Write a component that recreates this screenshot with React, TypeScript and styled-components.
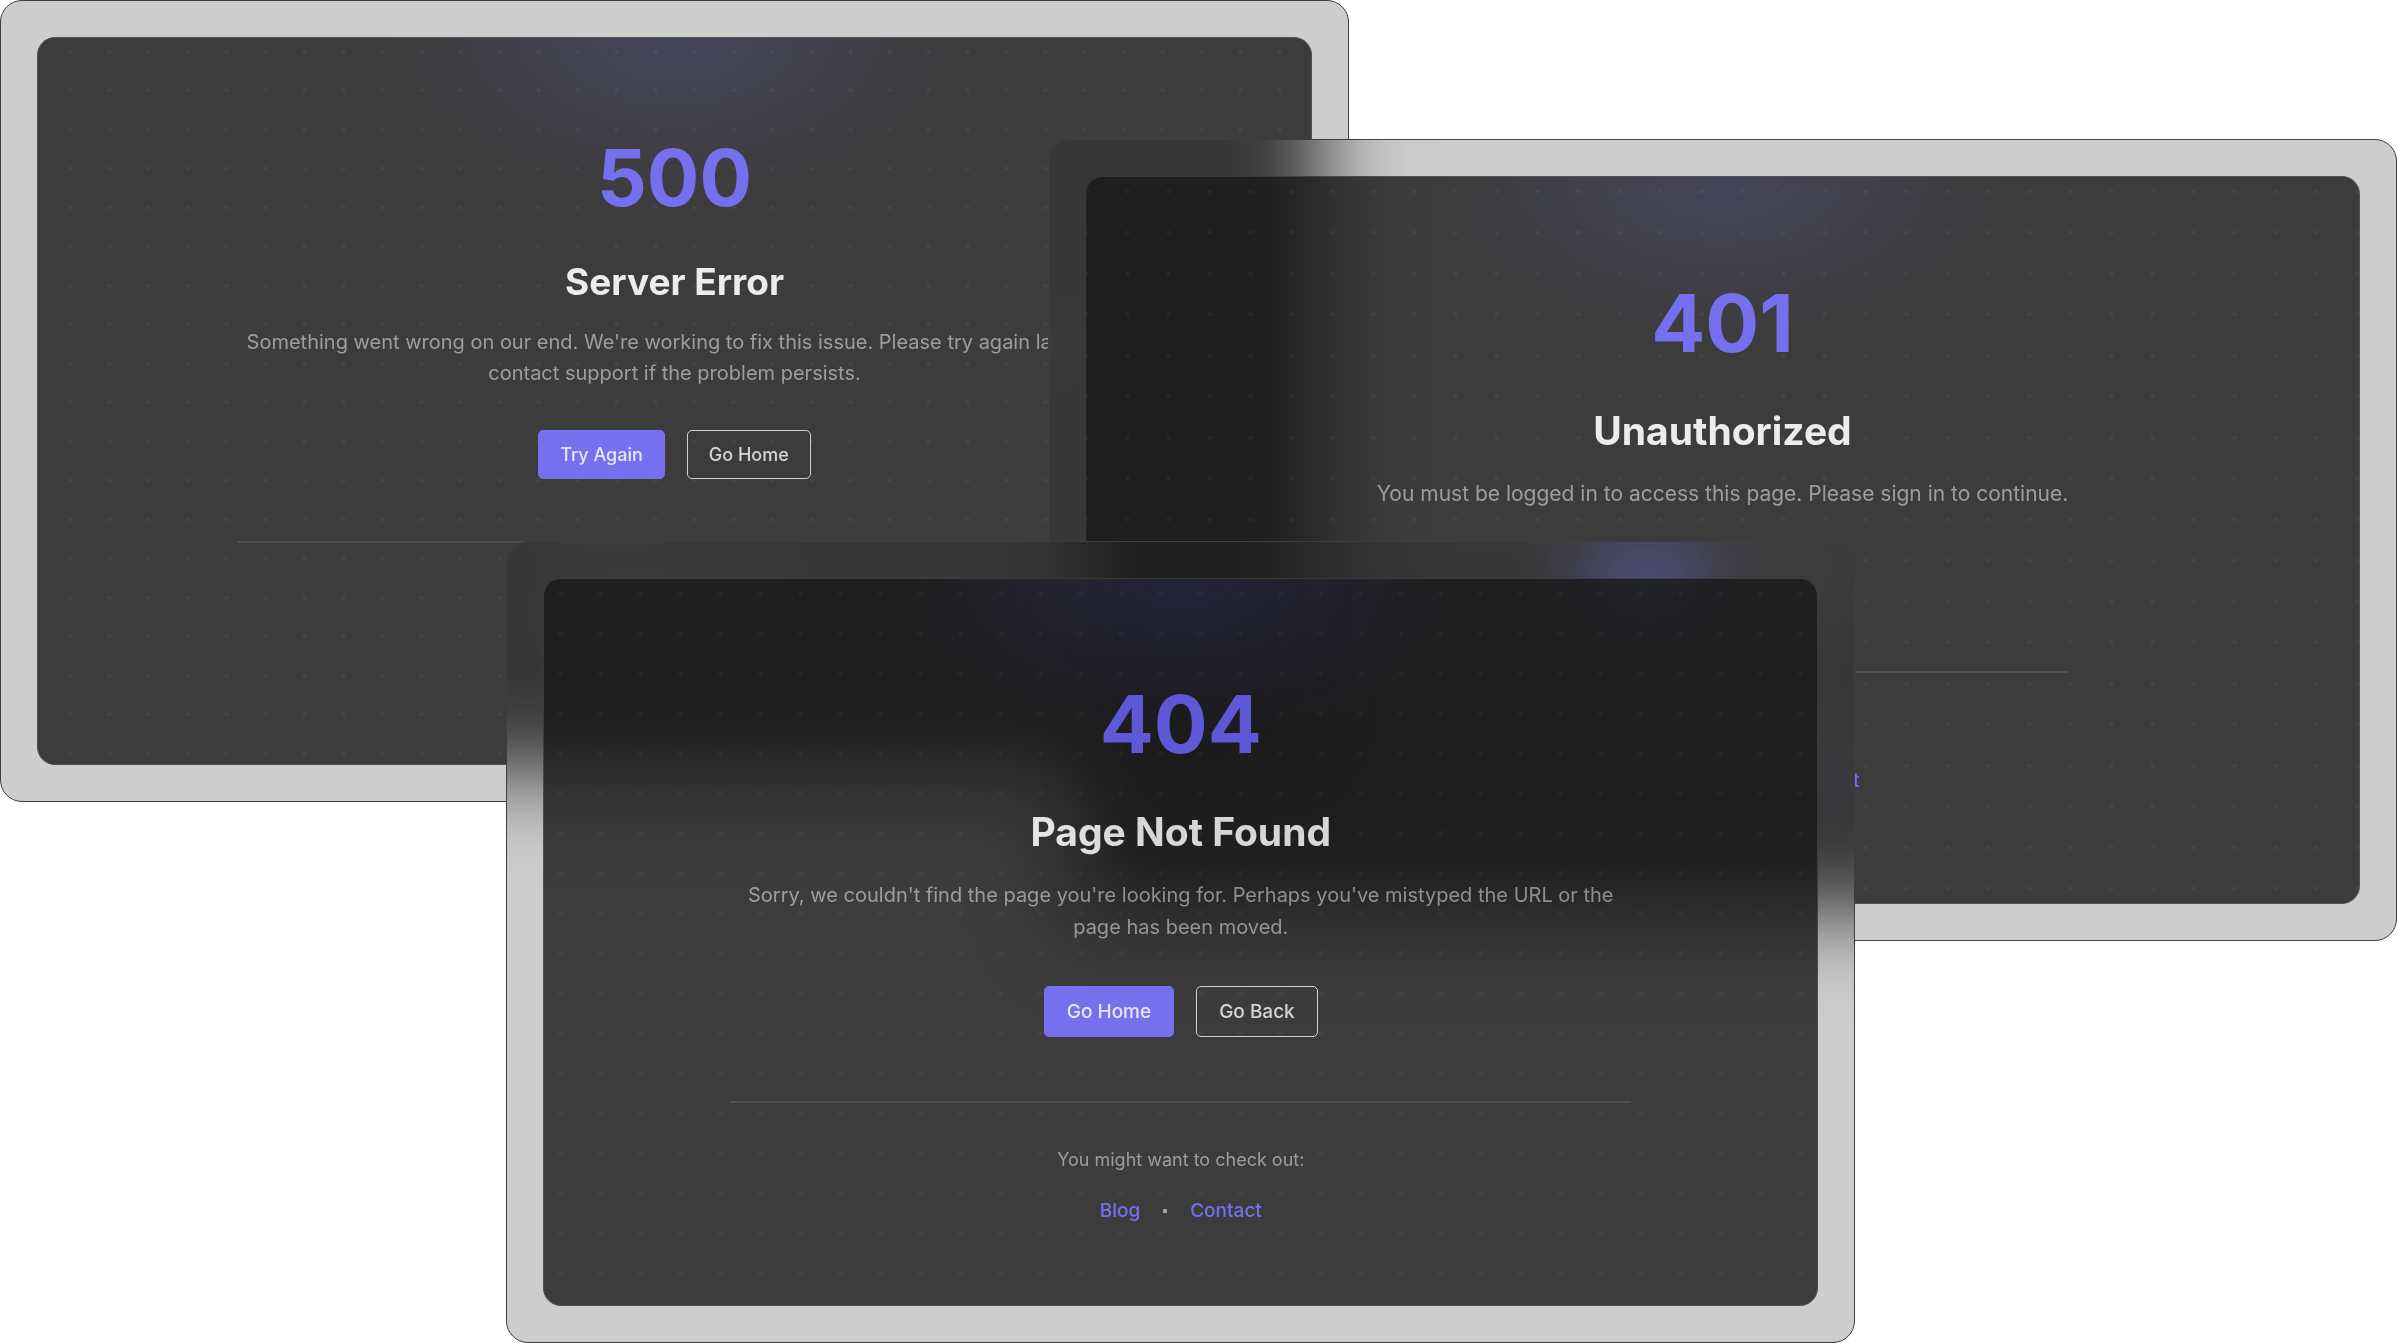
import React from "react";
import styled, { createGlobalStyle, css, ThemeProvider } from "styled-components";

type Scale = {
  code: number;
  title: number;
  titleLine: number;
  body: number;
  bodyLine: number;
  small: number;
  button: number;
  buttonPad: number;
  padTop: number;
  titleGap: number;
  bodyGap: number;
  actionGap: number;
  footGap: number;
  footPad: number;
  linkGap: number;
  max: number;
  dot: number;
};

const compact: Scale = {
  code: 78, title: 37, titleLine: 46, body: 20, bodyLine: 31, small: 18, button: 49, buttonPad: 21,
  padTop: 101, titleGap: 42, bodyGap: 22, actionGap: 41, footGap: 62, footPad: 41,
  linkGap: 22, max: 874, dot: 39,
};
const regular: Scale = {
  code: 80, title: 39, titleLine: 48, body: 20, bodyLine: 32, small: 19, button: 51, buttonPad: 22,
  padTop: 105, titleGap: 44, bodyGap: 23, actionGap: 43, footGap: 64, footPad: 43,
  linkGap: 23, max: 901, dot: 40,
};
const roomy: Scale = {
  code: 80, title: 39, titleLine: 48, body: 21, bodyLine: 33, small: 19, button: 52, buttonPad: 22,
  padTop: 106, titleGap: 44, bodyGap: 22, actionGap: 44, footGap: 65, footPad: 43,
  linkGap: 25, max: 910, dot: 41,
};

const Global = createGlobalStyle`
  * { box-sizing: border-box; }
  body {
    margin: 0;
    background: #fff;
    font-family: Inter, "Liberation Sans", sans-serif;
  }
`;

const Desktop = styled.main`
  position: relative;
  width: 100%;
  aspect-ratio: 2397 / 1343;
  overflow: hidden;
  background: #fff;
`;

type Place = "back" | "middle" | "front";

const places = {
  back: css`top: 0; left: 0;`,
  middle: css`top: 10.35%; right: 0;`,
  front: css`bottom: 0; left: 21.12%;`,
};

const corner = "radial-gradient(circle, #000 21px, transparent 22px)";
const fill = "linear-gradient(#000, #000)";

const Window = styled.section<{ $place: Place }>`
  position: absolute;
  z-index: 0;
  ${(p) => places[p.$place]}
  display: flex;
  width: 56.28%;
  aspect-ratio: 1349 / 802;
  padding: 37px;

  /* The glass reaches past the window, so that its blur is even up to the edge,
     and is masked back to the window's rounded shape. */
  &::before {
    content: "";
    position: absolute;
    z-index: -1;
    inset: -120px;
    padding: 120px;
    background: rgba(37, 37, 37, 0.23);
    backdrop-filter: blur(40px);
    mask-image: ${corner}, ${corner}, ${corner}, ${corner}, ${fill}, ${fill};
    mask-position: 0 0, 100% 0, 0 100%, 100% 100%, 0 22px, 22px 0;
    mask-size: 44px 44px, 44px 44px, 44px 44px, 44px 44px, 100% calc(100% - 44px), calc(100% - 44px) 100%;
    mask-repeat: no-repeat;
    mask-origin: content-box;
    mask-clip: content-box;
    pointer-events: none;
  }

  &::after {
    content: "";
    position: absolute;
    inset: 0;
    border: 1px solid #3e3e3e;
    border-radius: 22px;
    pointer-events: none;
  }
`;

const Screen = styled.div`
  flex: 1;
  display: flex;
  flex-direction: column;
  align-items: center;
  padding-top: ${(p) => (p.theme as Scale).padTop}px;
  border: 1px solid #3c3c3c;
  border-radius: 18px;
  opacity: 0.86;
  overflow: hidden;
  background:
    radial-gradient(ellipse 300px 170px at 50% 0, rgba(99, 92, 241, 0.17), rgba(99, 92, 241, 0.11) 40%, rgba(99, 92, 241, 0.03) 75%, transparent),
    radial-gradient(circle, rgba(255, 255, 255, 0.05) 1px, transparent 3px)
      calc(50% + 20px) -6px / ${(p) => `${(p.theme as Scale).dot}px ${(p.theme as Scale).dot}px`},
    rgba(25, 25, 25, 0.94);
`;

const Content = styled.div`
  display: flex;
  flex-direction: column;
  align-items: center;
  width: fit-content;
  max-width: ${(p) => (p.theme as Scale).max}px;
  text-align: center;
`;

const Code = styled.p`
  margin: 0;
  font-size: ${(p) => (p.theme as Scale).code}px;
  line-height: 1;
  font-weight: 700;
  color: #6762f4;
`;

const Title = styled.h1`
  margin: ${(p) => (p.theme as Scale).titleGap}px 0 0;
  font-size: ${(p) => (p.theme as Scale).title}px;
  line-height: ${(p) => (p.theme as Scale).titleLine}px;
  font-weight: 700;
  color: #f2f2f2;
`;

const Message = styled.p`
  margin: ${(p) => (p.theme as Scale).bodyGap}px 0 0;
  font-size: ${(p) => (p.theme as Scale).body}px;
  line-height: ${(p) => (p.theme as Scale).bodyLine}px;
  color: #969696;
`;

const Actions = styled.div`
  display: flex;
  gap: 22px;
  margin-top: ${(p) => (p.theme as Scale).actionGap}px;
`;

const Button = styled.button<{ $primary?: boolean }>`
  height: ${(p) => (p.theme as Scale).button}px;
  padding: 0 ${(p) => (p.theme as Scale).buttonPad}px;
  border: 1px solid ${(p) => (p.$primary ? "#6762f4" : "#d2d2d2")};
  border-radius: 5px;
  background: ${(p) => (p.$primary ? "#6762f4" : "transparent")};
  color: ${(p) => (p.$primary ? "#ebebff" : "#d6d6d6")};
  font-family: inherit;
  font-size: ${(p) => (p.theme as Scale).small}px;
  font-weight: 500;
`;

const Suggestions = styled.footer`
  display: flex;
  flex-direction: column;
  align-items: center;
  gap: 23px;
  width: 100%;
  margin-top: ${(p) => (p.theme as Scale).footGap}px;
  padding-top: ${(p) => (p.theme as Scale).footPad}px;
  border-top: 2px solid #3c3c3c;
  font-size: ${(p) => (p.theme as Scale).small}px;
  line-height: 28px;
  color: #969696;
`;

const Hint = styled.p`
  margin: 0;
  font-size: 18px;
`;

const Links = styled.nav`
  display: flex;
  align-items: center;
  gap: ${(p) => (p.theme as Scale).linkGap}px;
`;

const Link = styled.a`
  color: #6762f4;
  font-weight: 500;
  text-decoration: none;
`;

const Dot = styled.span`
  width: 4px;
  height: 4px;
  border-radius: 1px;
  background: #a0a0a0;
`;

type ErrorPageProps = {
  place: Place;
  scale: Scale;
  code: string;
  title: string;
  message: string;
  primary: string;
  secondary: string;
  links: string[];
};

function ErrorPage({ place, scale, code, title, message, primary, secondary, links }: ErrorPageProps) {
  return (
    <ThemeProvider theme={scale}>
      <Window $place={place}>
        <Screen>
          <Content>
            <Code>{code}</Code>
            <Title>{title}</Title>
            <Message>{message}</Message>
            <Actions>
              <Button type="button" $primary>{primary}</Button>
              <Button type="button">{secondary}</Button>
            </Actions>
            <Suggestions>
              <Hint>You might want to check out:</Hint>
              <Links>
                {links.map((name, i) => (
                  <React.Fragment key={name}>
                    {i > 0 && <Dot />}
                    <Link href={`#${name.toLowerCase()}`}>{name}</Link>
                  </React.Fragment>
                ))}
              </Links>
            </Suggestions>
          </Content>
        </Screen>
      </Window>
    </ThemeProvider>
  );
}

export default function App() {
  return (
    <>
      <Global />
      <Desktop>
        <ErrorPage
          place="back"
          scale={compact}
          code="500"
          title="Server Error"
          message="Something went wrong on our end. We're working to fix this issue. Please try again later or contact support if the problem persists."
          primary="Try Again"
          secondary="Go Home"
          links={["Home", "Blog", "Contact"]}
        />
        <ErrorPage
          place="middle"
          scale={roomy}
          code="401"
          title="Unauthorized"
          message="You must be logged in to access this page. Please sign in to continue."
          primary="Sign In"
          secondary="Go Home"
          links={["Home", "Blog", "Contact"]}
        />
        <ErrorPage
          place="front"
          scale={regular}
          code="404"
          title="Page Not Found"
          message="Sorry, we couldn't find the page you're looking for. Perhaps you've mistyped the URL or the page has been moved."
          primary="Go Home"
          secondary="Go Back"
          links={["Blog", "Contact"]}
        />
      </Desktop>
    </>
  );
}
